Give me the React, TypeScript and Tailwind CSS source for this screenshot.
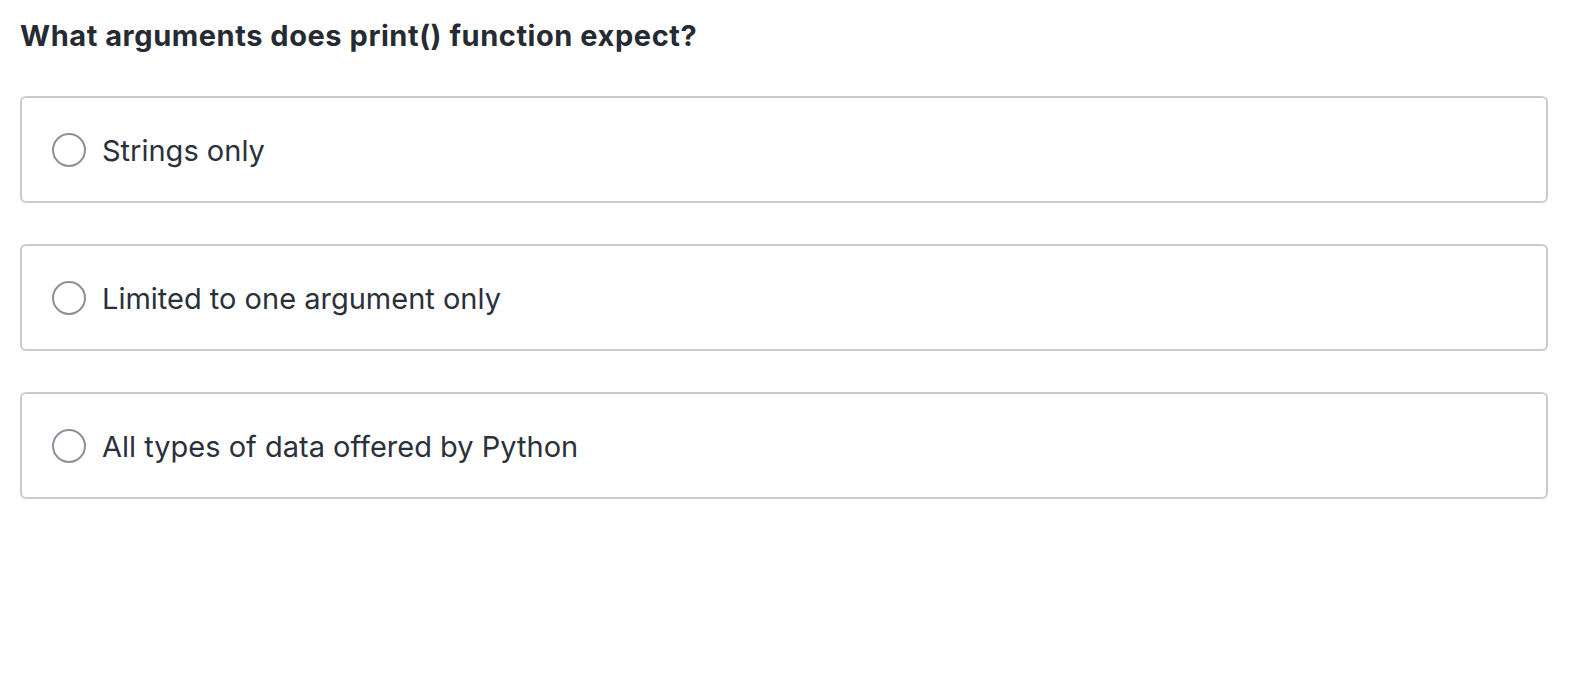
const options = ["Strings only", "Limited to one argument only", "All types of data offered by Python"];

export default function App() {
  return (
    <div className="min-h-screen bg-white pl-[20px] pr-[36px] pt-[20px] text-[#2b303a]" style={{ fontFamily: "Inter, 'Noto Sans', sans-serif" }}>
      <h1 className="text-[29px] font-bold leading-[32px] tracking-[0.55px] text-[#252a33]">What arguments does print() function expect?</h1>
      <div className="mt-[44px] flex flex-col gap-[41px]">
        {options.map((option) => (
          <label key={option} className="flex h-[107px] cursor-pointer items-center gap-[16px] rounded-[6px] border-2 border-[#cbcbcb] bg-white px-[30px]">
            <span className="h-[34px] w-[34px] shrink-0 rounded-full border-2 border-[#8a909c] bg-white" />
            <span className="pt-[2px] text-[29px] leading-none">{option}</span>
          </label>
        ))}
      </div>
    </div>
  );
}
